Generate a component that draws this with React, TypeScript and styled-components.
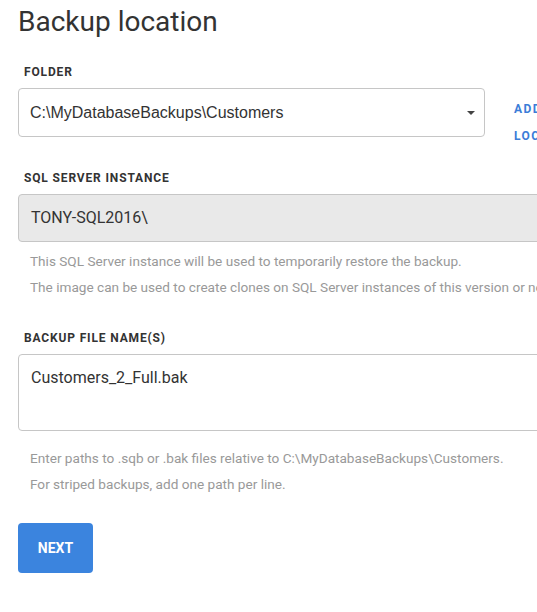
import React from "react";
import styled, { createGlobalStyle } from "styled-components";

const Global = createGlobalStyle`
  html, body { margin: 0; padding: 0; background: #fff; overflow: hidden; }
  body { font-family: Roboto, "Liberation Sans", Arial, sans-serif; }
`;

const Page = styled.div`
  width: 640px;
  padding: 4px 0 0 18px;
  box-sizing: border-box;
`;

const Title = styled.h1`
  margin: 0;
  font-family: Roboto, sans-serif;
  font-weight: 400;
  font-size: 28px;
  line-height: 36px;
  color: #333;
`;

const Section = styled.section<{ $top: number }>`
  margin-top: ${(p) => p.$top}px;
`;

const Label = styled.div`
  font-family: Roboto, sans-serif;
  font-weight: 700;
  font-size: 12px;
  letter-spacing: 0.85px;
  line-height: 14px;
  color: #333;
  padding-left: 6px;
  margin-bottom: 9px;
`;

const FolderRow = styled.div`
  display: flex;
  align-items: flex-start;
  gap: 29px;
  height: 49px;
`;

const Select = styled.div`
  width: 467px;
  height: 49px;
  box-sizing: border-box;
  border: 1px solid #c6c6c6;
  border-radius: 4px;
  display: flex;
  align-items: center;
  padding: 0 9px 0 11px;
  font-family: "Liberation Sans", Arial, sans-serif;
  font-size: 16px;
  color: #333;
`;

const SelectText = styled.span`
  flex: 1;
`;

const Caret = styled.span`
  width: 0;
  height: 0;
  border-left: 4px solid transparent;
  border-right: 4px solid transparent;
  border-top: 4px solid #444;
`;

const Links = styled.div`
  display: flex;
  flex-direction: column;
  gap: 13px;
  padding-top: 14px;
`;

const LinkText = styled.a`
  font-family: Roboto, sans-serif;
  font-weight: 700;
  font-size: 12px;
  letter-spacing: 1.4px;
  line-height: 14px;
  color: #3b7dd8;
  text-decoration: none;
  white-space: nowrap;
`;

const Field = styled.div<{ $height: number; $disabled?: boolean; $align: string }>`
  width: 600px;
  height: ${(p) => p.$height}px;
  box-sizing: border-box;
  border: 1px solid #c6c6c6;
  border-radius: 4px;
  background: ${(p) => (p.$disabled ? "#e9e9e9" : "#fff")};
  display: flex;
  align-items: ${(p) => p.$align};
  padding: ${(p) => (p.$align === "center" ? "0 12px" : "13px 12px")};
  font-family: Roboto, sans-serif;
  font-size: 16px;
  line-height: 20px;
  color: #333;
`;

const Help = styled.div<{ $top: number }>`
  padding: ${(p) => p.$top}px 0 0 12px;
`;

const HelpLine = styled.p`
  margin: 0;
  font-family: Roboto, sans-serif;
  font-size: 13.6px;
  line-height: 26px;
  color: #999;
  white-space: nowrap;
`;

const Button = styled.button`
  margin-top: 26px;
  width: 75px;
  height: 50px;
  border: none;
  border-radius: 4px;
  background: #3b84de;
  color: #fff;
  font-family: Roboto, sans-serif;
  font-weight: 700;
  font-size: 14px;
  cursor: pointer;
`;

export default function App() {
  return (
    <Page>
      <Global />
      <Title>Backup location</Title>
      <Section $top={25}>
        <Label>FOLDER</Label>
        <FolderRow>
          <Select>
            <SelectText>C:\MyDatabaseBackups\Customers</SelectText>
            <Caret />
          </Select>
          <Links>
            <LinkText>ADD</LinkText>
            <LinkText>LOCATE</LinkText>
          </Links>
        </FolderRow>
      </Section>
      <Section $top={34}>
        <Label>SQL SERVER INSTANCE</Label>
        <Field $height={48} $disabled $align="center">TONY-SQL2016\</Field>
        <Help $top={6}>
          <HelpLine>This SQL Server instance will be used to temporarily restore the backup.</HelpLine>
          <HelpLine>The image can be used to create clones on SQL Server instances of this version or newer.</HelpLine>
        </Help>
      </Section>
      <Section $top={31}>
        <Label>BACKUP FILE NAME(S)</Label>
        <Field $height={77} $align="flex-start">Customers_2_Full.bak</Field>
        <Help $top={14}>
          <HelpLine>Enter paths to .sqb or .bak files relative to C:\MyDatabaseBackups\Customers.</HelpLine>
          <HelpLine>For striped backups, add one path per line.</HelpLine>
        </Help>
      </Section>
      <Button>NEXT</Button>
    </Page>
  );
}
